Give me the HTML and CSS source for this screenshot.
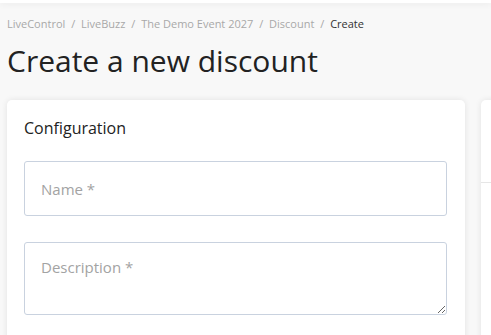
FILE: index.html
```html
<!DOCTYPE html>
<html lang="en">

<head>
    <meta charset="UTF-8" />
    <meta name="viewport" content="width=device-width, initial-scale=1.0" />
    <title>Create a new discount</title>
    <link rel="stylesheet" href="styles.css">
</head>

<body>
    <div class="topbar"></div>
    <div class="page">
        <nav class="breadcrumb">
            <a href="#">LiveControl</a>
            <span class="sep">/</span>
            <a href="#">LiveBuzz</a>
            <span class="sep">/</span>
            <a href="#">The Demo Event 2027</a>
            <span class="sep">/</span>
            <a href="#">Discount</a>
            <span class="sep">/</span>
            <span class="current">Create</span>
        </nav>
        <h1>Create a new discount</h1>

        <div class="columns">
            <div class="card">
                <h2>Configuration</h2>
                <form>
                    <div class="form-group">
                        <input type="text" placeholder="Name *">
                    </div>
                    <div class="form-group">
                        <textarea placeholder="Description *"></textarea>
                    </div>
                </form>
            </div>
            <div class="card side">
                <div class="side-head"></div>
            </div>
        </div>
    </div>
</body>

</html>
```

FILE: styles.css
```css
body {
    font-family: "Open Sans", Arial, sans-serif;
    background-color: #f8f8f8;
    margin: 0;
    overflow: hidden;
}

.topbar {
    height: 3px;
    background-color: #fff;
    box-shadow: 0 1px 6px rgba(0, 0, 0, 0.08);
}

.page {
    padding: 0 0 0 7px;
}

.breadcrumb {
    font-size: 11px;
    line-height: 15px;
    margin-top: 13px;
    color: #a8a8a8;
}

.breadcrumb a {
    color: #a8a8a8;
    text-decoration: none;
}

.breadcrumb .sep {
    margin: 0 3px;
}

.breadcrumb .current {
    color: #333;
}

h1 {
    font-size: 30px;
    font-weight: 400;
    color: #222;
    margin: 10px 0 0;
    line-height: 40px;
}

.columns {
    display: grid;
    grid-template-columns: 458px 200px;
    gap: 16px;
    margin-top: 19px;
}

.card {
    background-color: #fff;
    border-radius: 5px;
    box-shadow: 0 0 6px rgba(0, 0, 0, 0.09);
    padding: 17px 18px 40px 17px;
    height: 300px;
}

.card h2 {
    font-size: 16px;
    font-weight: 400;
    color: #222;
    margin: 0 0 22px;
    line-height: 22px;
}

.form-group {
    margin-bottom: 26px;
}

.form-group input,
.form-group textarea {
    display: block;
    width: 100%;
    box-sizing: border-box;
    font-family: "Open Sans", Arial, sans-serif;
    font-size: 15px;
    color: #333;
    border: 1px solid #c9d2df;
    border-radius: 3px;
    padding: 0 16px;
    background-color: #fff;
}

.form-group input {
    height: 55px;
}

.form-group textarea {
    height: 73px;
    padding-top: 14px;
    resize: vertical;
}

::placeholder {
    color: #a3a3a3;
}

.card.side {
    padding: 0;
}

.side-head {
    height: 82px;
    border-bottom: 1px solid #e6e6e6;
}
```
